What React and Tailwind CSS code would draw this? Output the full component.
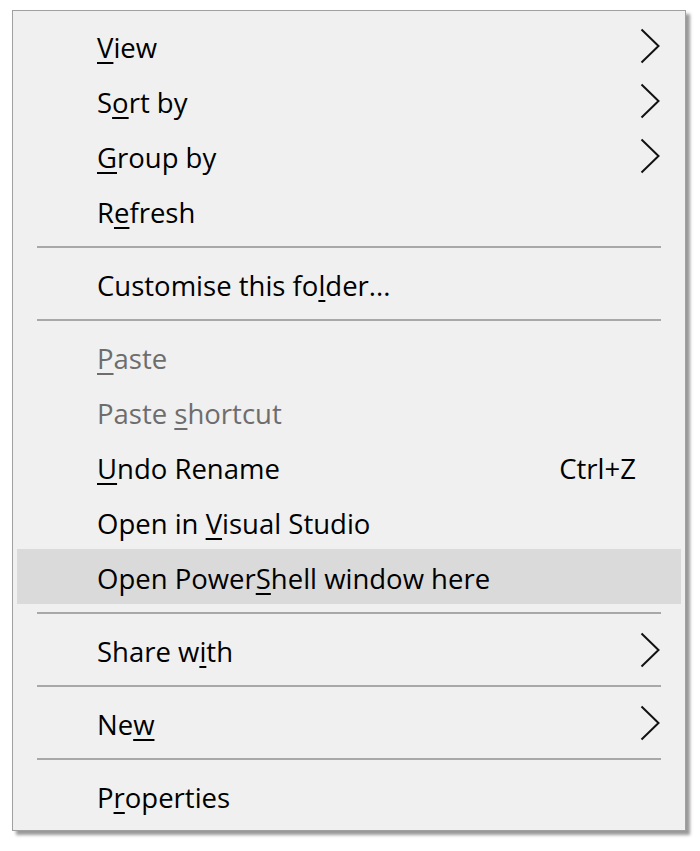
import React from 'react';

// mnemonic = index of the underlined letter
const items = [
    { label: 'View', u: 0, sub: true },
    { label: 'Sort by', u: 1, sub: true },
    { label: 'Group by', u: 0, sub: true },
    { label: 'Refresh', u: 1 },
    'sep',
    { label: 'Customise this folder...', u: 17 },
    'sep',
    { label: 'Paste', u: 0, disabled: true },
    { label: 'Paste shortcut', u: 6, disabled: true },
    { label: 'Undo Rename', u: 0, shortcut: 'Ctrl+Z' },
    { label: 'Open in Visual Studio', u: 8 },
    { label: 'Open PowerShell window here', u: 10, hover: true },
    'sep',
    { label: 'Share with', u: 7, sub: true },
    'sep',
    { label: 'New', u: 2, sub: true },
    'sep',
    { label: 'Properties', u: 1 },
];

function Chevron() {
    return (
        <svg width="20" height="36" viewBox="0 0 20 36" className="shrink-0">
            <polyline points="1.5,1.5 18.5,18 1.5,34.5" fill="none" stroke="#111" strokeWidth="2" />
        </svg>
    );
}

function Label({ label, u }) {
    return (
        <span>
            {label.slice(0, u)}
            <span className="underline decoration-[1.5px] underline-offset-[4px]">{label[u]}</span>
            {label.slice(u + 1)}
        </span>
    );
}

export default function App() {
    return (
        <div className="w-[700px] h-[851px] bg-white pt-[10px] pl-[12px]" style={{ fontFamily: '"Open Sans", "Noto Sans", sans-serif' }}>
            <div className="w-[674px] border border-[#a0a0a0] bg-[#f0f0f0] py-[7px] px-[4px] shadow-[4px_4px_3px_rgba(0,0,0,0.4)]">
                {items.map((it, i) => {
                    if (it === 'sep') {
                        return (
                            <div key={i} className="h-[18px] flex items-center pl-[20px] pr-[20px]">
                                <div className="h-[2px] w-full bg-[#a8a8a8]" />
                            </div>
                        );
                    }
                    return (
                        <div
                            key={i}
                            className={`h-[55px] flex items-center pl-[80px] pr-[21px] text-[27.5px] ${it.hover ? 'bg-[#dadada]' : ''} ${it.disabled ? 'text-[#6d6d6d]' : 'text-black'}`}
                        >
                            <div className="flex-1 pt-[4px] whitespace-nowrap">
                                <Label label={it.label} u={it.u} />
                            </div>
                            {it.shortcut && <span className="pr-[24px] pt-[4px]">{it.shortcut}</span>}
                            {it.sub && <Chevron />}
                        </div>
                    );
                })}
            </div>
        </div>
    );
}
